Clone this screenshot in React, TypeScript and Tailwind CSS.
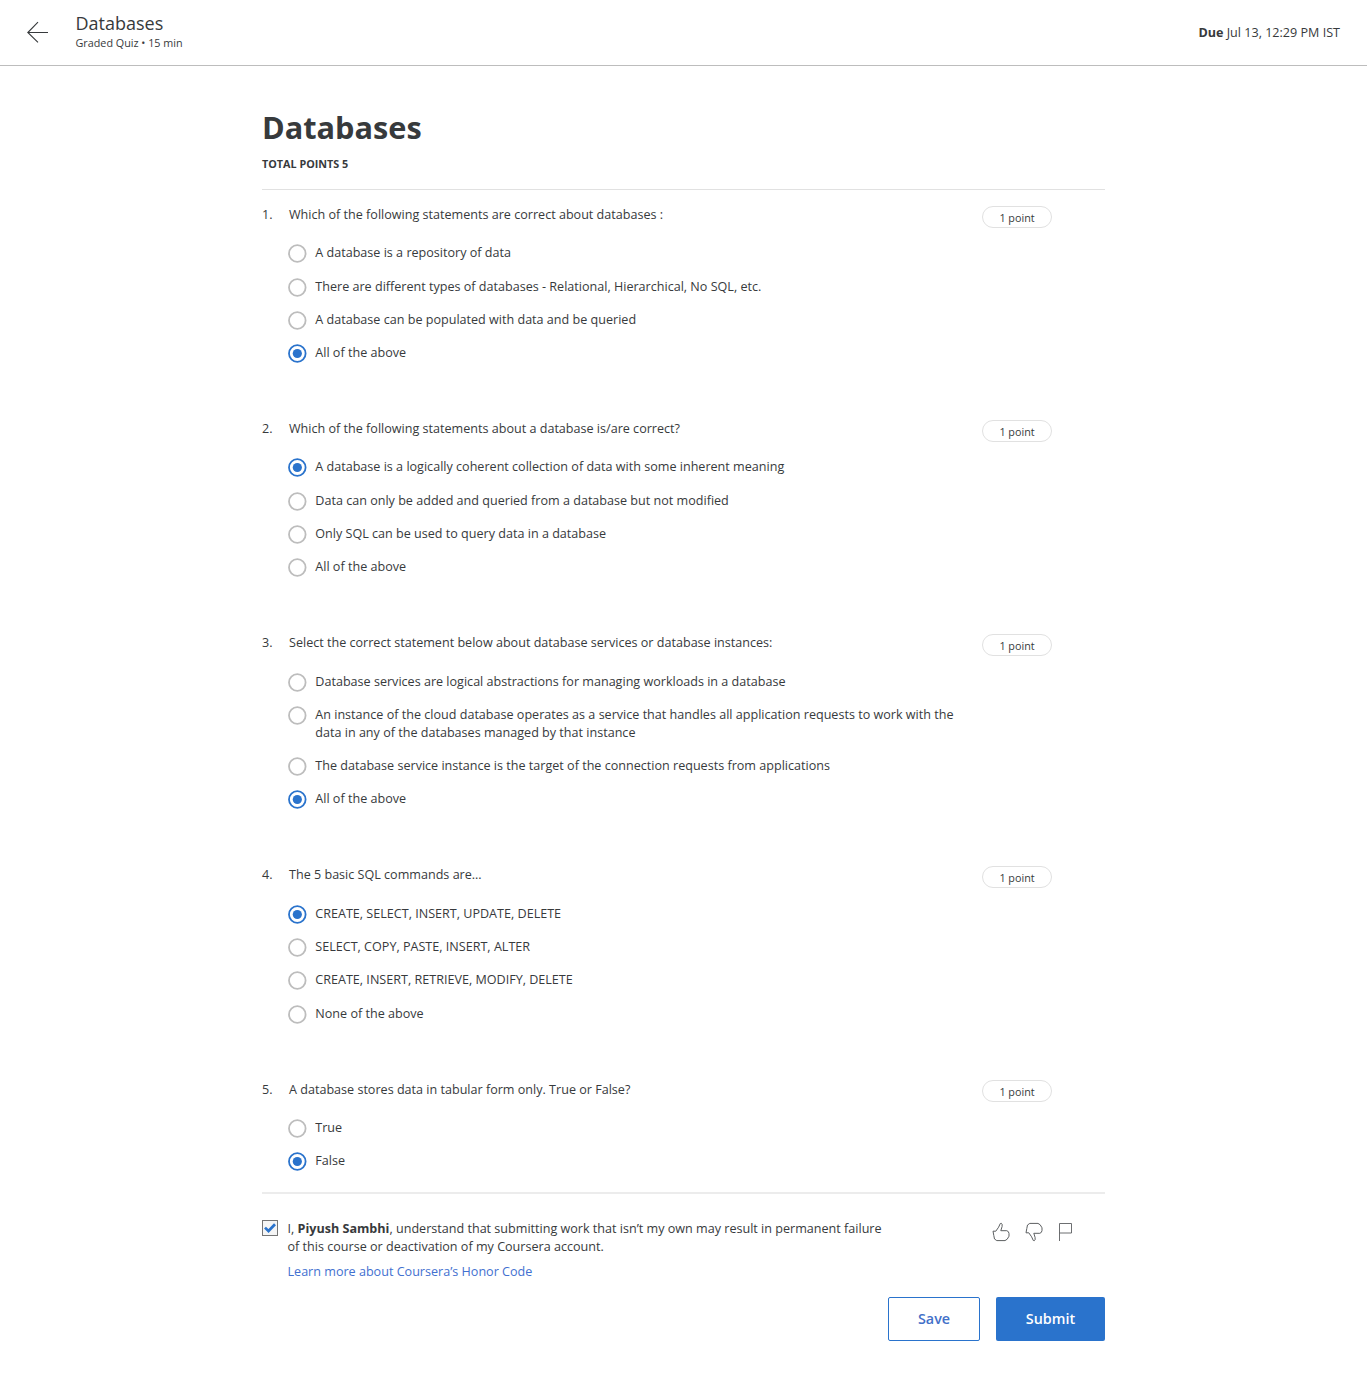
import React from 'react';

type Question = { text: string; options: string[]; selected: number };

const questions: Question[] = [
  {
    text: 'Which of the following statements are correct about databases :',
    options: [
      'A database is a repository of data',
      'There are different types of databases - Relational, Hierarchical, No SQL, etc.',
      'A database can be populated with data and be queried',
      'All of the above',
    ],
    selected: 3,
  },
  {
    text: 'Which of the following statements about a database is/are correct?',
    options: [
      'A database is a logically coherent collection of data with some inherent meaning',
      'Data can only be added and queried from a database but not modified',
      'Only SQL can be used to query data in a database',
      'All of the above',
    ],
    selected: 0,
  },
  {
    text: 'Select the correct statement below about database services or database instances:',
    options: [
      'Database services are logical abstractions for managing workloads in a database',
      'An instance of the cloud database operates as a service that handles all application requests to work with the data in any of the databases managed by that instance',
      'The database service instance is the target of the connection requests from applications',
      'All of the above',
    ],
    selected: 3,
  },
  {
    text: 'The 5 basic SQL commands are…',
    options: [
      'CREATE, SELECT, INSERT, UPDATE, DELETE',
      'SELECT, COPY, PASTE, INSERT, ALTER',
      'CREATE, INSERT, RETRIEVE, MODIFY, DELETE',
      'None of the above',
    ],
    selected: 0,
  },
  {
    text: 'A database stores data in tabular form only. True or False?',
    options: ['True', 'False'],
    selected: 1,
  },
];

function Radio({ checked }: { checked: boolean }) {
  return (
    <svg className="h-[19px] w-[19px] shrink-0" viewBox="0 0 19 19" fill="none">
      <circle cx="9.3" cy="9.5" r="8.3" stroke={checked ? '#2a73cc' : '#bdbdbd'} strokeWidth="1.8" />
      {checked && <circle cx="9.3" cy="9.5" r="4.6" fill="#2a73cc" />}
    </svg>
  );
}

function QuestionBlock({ question, index }: { question: Question; index: number }) {
  return (
    <section className="flex items-start">
      <div className="w-[27px] shrink-0">{index + 1}.</div>
      <div className="w-[693px] shrink-0">
        <p>{question.text}</p>
        <div className="-ml-[1.5px] mt-[20.25px] flex flex-col gap-[15.3px]">
          {question.options.map((option, i) => (
            <label key={option} className="flex items-start">
              <span className="flex h-[18px] shrink-0">
                <Radio checked={i === question.selected} />
              </span>
              <span className="ml-[8.8px] w-[650px]">{option}</span>
            </label>
          ))}
        </div>
      </div>
      <div className="-mt-[0.5px] flex h-[22px] w-[70px] items-center justify-center rounded-full border border-[#e1e1e1] pt-[2px] text-[10.79px]">
        1 point
      </div>
    </section>
  );
}

export default function App() {
  return (
    <div className="min-h-[1398px] bg-white font-['Open_Sans',sans-serif] text-[12.59px] leading-[18px] text-[#373a3c]">
      <header className="flex h-[66px] items-center justify-between border-b border-[#bdbdbd] pl-[27px] pr-[27px]">
        <div className="flex items-center">
          <svg className="mb-[1px] h-[22px] w-[22px]" viewBox="0 0 22 22" fill="none" stroke="#373a3c" strokeWidth="1.1">
            <path d="M21 11.5H0.8M11 1.2L0.8 11.5L11 21.3" />
          </svg>
          <div className="ml-[26.5px] pb-[4px]">
            <div className="text-[18px] leading-[24px]">Databases</div>
            <div className="text-[10.79px] leading-[16px]">Graded Quiz • 15 min</div>
          </div>
        </div>
        <div>
          <strong className="font-bold">Due</strong> Jul 13, 12:29 PM IST
        </div>
      </header>

      <main className="mx-auto w-[843px] pt-[38px]">
        <h1 className="text-[30.7px] font-bold leading-[46px]">Databases</h1>
        <div className="mt-[6px] text-[10.79px] font-bold leading-[16px]">TOTAL POINTS 5</div>
        <div className="mt-[17px] h-px bg-[#e1e1e1]" />

        <div className="mt-[16px] flex flex-col gap-[58px]">
          {questions.map((question, i) => (
            <QuestionBlock key={question.text} question={question} index={i} />
          ))}
        </div>

        <div className="mt-[22px] h-[2px] bg-[#ececec]" />

        <div className="mt-[26px] flex items-start">
          <svg className="h-[16px] w-[16px] shrink-0" viewBox="0 0 16 16" fill="none">
            <rect x="0.5" y="0.5" width="15" height="15" fill="#f5f5f5" stroke="#757575" />
            <path d="M3 7.6L6.5 11L13 4.2" stroke="#2a73cc" strokeWidth="2.7" />
          </svg>
          <div className="ml-[9.5px] w-[600px]">
            <p>
              I, <strong className="font-bold">Piyush Sambhi</strong>, understand that submitting work that isn’t my own may result in permanent failure of this course or deactivation of my Coursera account.
            </p>
            <a className="mt-[7px] block text-[#4270d0]">Learn more about Coursera’s Honor Code</a>
          </div>
          <div className="ml-[104px] mt-[2px] flex gap-[15px]">
            <svg className="h-[20px] w-[18px]" viewBox="0 0 18 20" fill="none" stroke="#5c5f61" strokeWidth="1">
              <path d="M1 9.2H3.8L6.6 5.2L8.3 1.5Q9.5 0.8 10.1 2.2V4.5L8.8 8.7H14.8Q16.8 9.2 17 11.5V14.2L15.2 17.2L13 18.6H4.8L2.5 17L1.8 13.5Z" />
            </svg>
            <svg className="h-[20px] w-[18px]" viewBox="0 0 18 20" fill="none" stroke="#5c5f61" strokeWidth="1">
              <path d="M1 10.8H3.8L6.6 14.8L8.3 18.5Q9.5 19.2 10.1 17.8V15.5L8.8 11.3H14.8Q16.8 10.8 17 8.5V5.8L15.2 2.8L13 1.4H4.8L2.5 3L1.8 6.5Z" />
            </svg>
            <svg className="h-[20px] w-[16px]" viewBox="0 0 16 20" fill="none" stroke="#5c5f61" strokeWidth="0.9">
              <path d="M1.5 19V1.5H13.5V11H1.5" />
            </svg>
          </div>
        </div>

        <div className="mt-[15.5px] flex justify-end gap-[16px] text-[14.35px] font-semibold">
          <button className="h-[44px] w-[92px] rounded-[2px] border border-[#2a73cc] text-[#4270c8]">Save</button>
          <button className="h-[44px] w-[109px] rounded-[2px] bg-[#2a73cc] text-white">Submit</button>
        </div>
      </main>
    </div>
  );
}
